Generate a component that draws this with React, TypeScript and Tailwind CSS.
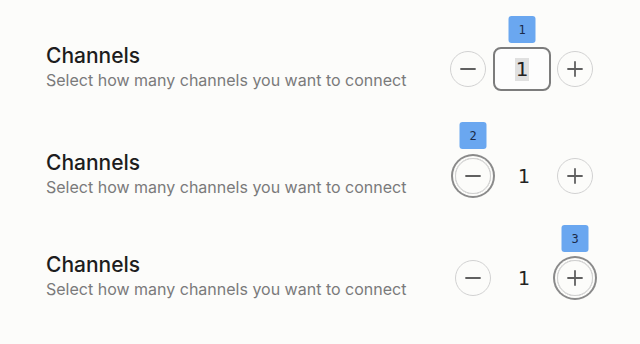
import type { ReactNode } from "react";

type Focus = "input" | "minus" | "plus";

function Badge({ n, offset }: { n: number; offset: string }) {
  return (
    <span
      className={`pointer-events-none absolute left-1/2 -translate-x-1/2 ${offset} flex h-[27px] w-[27px] items-center justify-center rounded-[3px] bg-[#6aa7f0] text-[12px] text-[#1b2a48] [font-family:'DejaVu_Sans_Mono',monospace]`}
    >
      {n}
    </span>
  );
}

function RoundButton({ kind, focused, badge }: { kind: "minus" | "plus"; focused?: boolean; badge?: ReactNode }) {
  return (
    <div className="relative">
      {badge}
      <button
        type="button"
        className={
          focused
            ? "flex h-9 w-9 items-center justify-center rounded-full border border-[#cfcfcf] ring-2 ring-[#8a8a8a] ring-offset-2 ring-offset-[#fcfcfa]"
            : "flex h-9 w-9 items-center justify-center rounded-full border border-[#d2d2d2]"
        }
      >
        <svg width="16" height="16" viewBox="0 0 16 16" fill="none" stroke="#606060" strokeWidth="1.8" strokeLinecap="round">
          <line x1="1" y1="8" x2="15" y2="8" />
          {kind === "plus" ? <line x1="8" y1="1" x2="8" y2="15" /> : null}
        </svg>
      </button>
    </div>
  );
}

function Row({ focus, n, className }: { focus: Focus; n: number; className: string }) {
  return (
    <div className={`flex h-[52px] items-center justify-between pl-[46px] pr-[47px] ${className}`}>
      <div className="-mt-[4px] [font-family:Inter,sans-serif]">
        <h2 className="text-[21px] leading-[26px] font-medium text-[#1d1d1d]">Channels</h2>
        <p className="text-[16px] leading-[22px] text-[#7a7a7a]">Select how many channels you want to connect</p>
      </div>
      {focus === "input" ? (
        <div className="flex items-center gap-[6px]">
          <div className="mr-px">
            <RoundButton kind="minus" />
          </div>
          <div className="relative">
            <Badge n={n} offset="bottom-[calc(100%+4px)]" />
            <div className="flex h-[44px] w-[58px] items-center justify-center rounded-[8px] border-2 border-[#7c7c7c] bg-[#fdfdfd] text-[20px] text-[#222] [font-family:'DejaVu_Sans',sans-serif]">
              <span className="bg-[#e0e0e0] px-[1px] leading-[23px]">1</span>
            </div>
          </div>
          <RoundButton kind="plus" />
        </div>
      ) : (
        <div className="flex items-center">
          <RoundButton
            kind="minus"
            focused={focus === "minus"}
            badge={focus === "minus" ? <Badge n={n} offset="bottom-[calc(100%+9px)]" /> : null}
          />
          <span className="w-[66px] text-center text-[19px] text-[#222] [font-family:'DejaVu_Sans',sans-serif]">1</span>
          <RoundButton
            kind="plus"
            focused={focus === "plus"}
            badge={focus === "plus" ? <Badge n={n} offset="bottom-[calc(100%+8px)]" /> : null}
          />
        </div>
      )}
    </div>
  );
}

export default function App() {
  return (
    <div className="h-[344px] w-[640px] overflow-hidden bg-[#fcfcfa] pt-[43px]">
      <Row focus="input" n={1} className="" />
      <Row focus="minus" n={2} className="mt-[55px]" />
      <Row focus="plus" n={3} className="mt-[50px]" />
    </div>
  );
}
